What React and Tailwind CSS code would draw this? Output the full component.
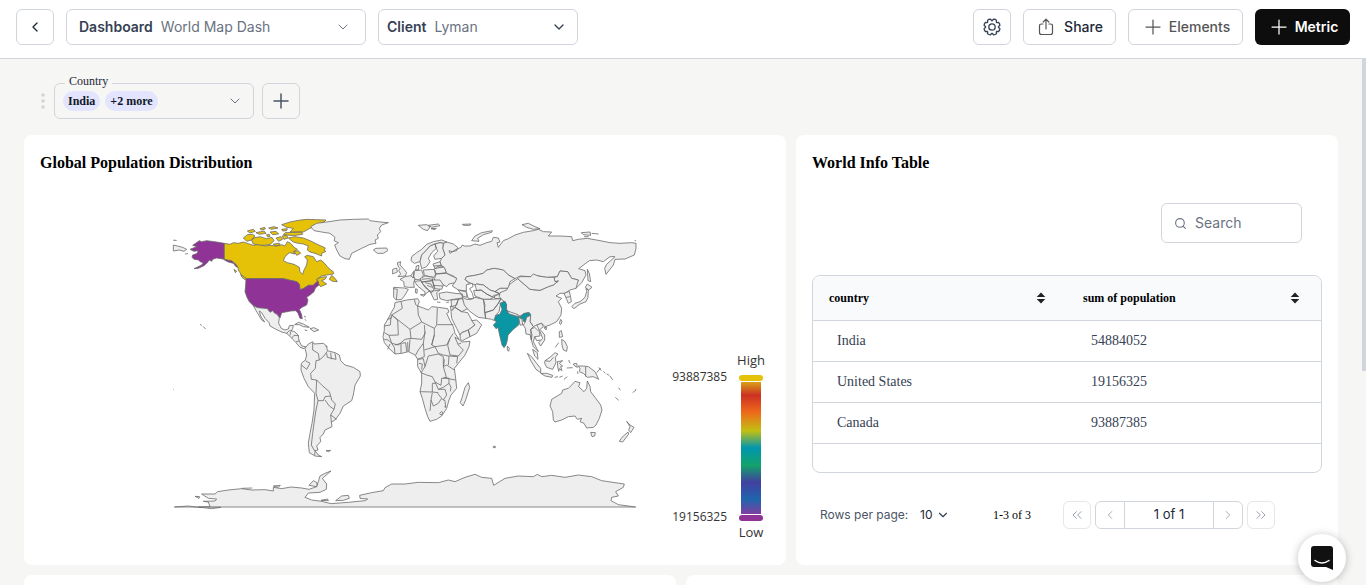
import { ChevronDown, ChevronLeft, ChevronRight, ChevronsLeft, ChevronsRight, Plus, Search } from 'lucide-react';

// Each region has its own origin, offset by `at` inside the 1410x915 map canvas
const regions = [
  {
    id: 'north-america',
    at: 'translate(0 0)',
    shapes: [
      { fill: '#8f3397', d: 'M163,100L140,96L110,92L95,95L88,92L68,106L80,110L70,114L60,118L72,124L84,122L82,130L68,135L66,142L72,148L86,150L90,155L100,158L95,165L72,176L85,175L102,167L112,158L118,150L125,154L128,148L140,144L163,148L175,150L185,152L198,163L204,172L198,170L190,160L175,156L163,150Z' },
      { fill: '#e5c207', d: 'M163,100L180,103L190,98L205,100L220,96L235,101L250,106L265,103L285,108L300,106L320,108L335,104L345,108L352,95L362,100L372,112L382,118L370,125L375,132L358,128L345,140L340,152L352,158L372,163L388,172L390,185L398,193L402,180L410,165L412,150L404,140L412,136L430,140L440,155L452,150L462,158L472,170L482,180L490,185L490,192L470,195L455,198L440,208L445,212L437,222L430,226L415,226L400,236L390,239L388,222L380,215L360,211L340,206L228,206L215,196L205,180L204,172L198,163L185,152L163,148Z' },
      { fill: '#e5c207', d: 'M440,208L452,202L470,200L465,208L455,212L470,222L452,230L445,222ZM478,208L485,196L495,205L502,215L488,214ZM192,178L200,184L196,188ZM212,194L230,206L226,210L216,202Z' },
      { fill: '#e5c207', d: 'M335,44L360,36L385,31L410,28L440,29L468,30L462,36L440,42L432,50L418,56L400,66L360,66L370,55L350,52ZM345,68L395,66L398,73L370,77L340,74ZM355,84L375,80L400,84L420,92L440,102L466,114L462,120L468,124L455,130L455,138L435,130L420,126L412,120L415,108L400,102L385,100L370,96ZM250,84L270,80L290,86L306,82L312,92L300,104L275,106L250,102L245,92ZM220,84L232,74L248,73L255,78L245,90L230,94ZM232,63L250,58L256,64L240,69ZM258,68L282,63L288,70L268,73ZM300,66L318,64L326,72L308,74ZM270,56L284,52L286,57L274,60ZM296,54L312,50L324,54L304,58ZM318,84L332,80L338,88L326,94ZM336,78L350,76L354,84L342,88ZM372,124L385,122L392,130L380,136ZM310,102L328,100L330,106L314,107ZM290,74L298,73L300,79L292,80ZM335,58L352,56L350,62L338,63Z' },
      { fill: '#8f3397', d: 'M228,206L340,206L360,211L380,215L388,222L390,239L400,236L415,226L430,226L437,218L444,212L447,225L436,234L432,245L420,255L410,262L414,270L410,285L396,292L388,298L394,312L397,326L390,325L384,310L378,302L362,303L352,305L335,308L330,324L320,312L314,310L308,302L300,307L292,296L262,293L250,287L238,275L231,262L225,245L227,225Z' },
      { d: 'M250,287L262,293L292,296L300,307L308,302L314,310L320,312L328,322L326,340L334,355L345,360L355,357L358,347L370,346L368,356L362,365L350,370L335,366L318,358L300,348L297,338L285,325L275,308L268,303L272,318L284,336L275,330L262,308Z' },
      { d: 'M350,370L358,362L372,364L385,375L387,392L395,408L407,410L402,416L390,412L378,398L365,384ZM365,384L372,376L385,377M378,396L388,392M362,365L360,376' },
      { d: 'M374,344L385,337L400,342L418,352L400,350L388,344ZM420,356L432,353L446,360L432,365ZM404,360L412,362M402,318L408,322M404,328L409,332' },
      { d: 'M10,105L22,108L38,112L50,118L42,124L28,120L10,123ZM12,90L20,92M45,132L54,131M90,343L95,346M99,349L107,357' },
    ],
  },
  {
    id: 'north-atlantic',
    at: 'translate(360 0)',
    shapes: [
      { d: 'M62,50L80,40L110,36L150,30L190,28L235,27L240,32L270,36L295,38L275,45L268,55L272,65L262,75L265,85L255,90L258,100L240,103L215,115L195,125L185,130L178,148L165,146L150,138L140,120L134,105L145,98L132,92L135,82L120,70L95,66L72,62Z' },
      { d: 'M250,120L258,115L290,114L293,122L280,130L262,130ZM322,158L332,155L330,165L342,178L350,188L346,198L324,200L332,192L326,182L330,176L324,168ZM308,178L320,174L322,186L308,192Z' },
    ],
  },
  {
    id: 'eurasia',
    at: 'translate(615 0)',
    shapes: [
      { d: 'M130,46L155,44L165,50L158,62L145,58ZM160,46L190,42L195,47L170,52ZM168,56L184,55L180,59ZM262,43L288,42L285,46L265,46ZM290,92L300,78L320,68L352,62L350,67L325,74L308,85L312,94Z' },
      { d: 'M205,100L215,96L235,102L248,112L245,122L232,125L222,122L225,130L240,120L258,112L262,105L268,108L285,108L300,102L315,106L335,98L350,94L355,82L370,84L375,96L366,98L370,112L385,92L400,86L420,75L445,67L475,62L490,58L505,65L530,66L520,78L555,78L590,80L593,92L610,88L637,85L675,92L705,98L735,100L770,98L783,100L783,115L778,135L750,147L720,148L715,165L693,193L689,175L695,163L720,140L705,140L685,155L665,150L643,152L611,176L630,182L633,195L620,218L603,235L598,230L610,210L590,205L578,185L555,183L547,200L515,202L475,195L467,200L435,198L420,206L400,195L385,180L358,175L335,180L325,190L300,196L275,200L270,208L282,220L275,243L250,240L232,228L245,205L235,198L215,190L210,178L198,165L195,155L200,145L210,135L203,115Z' },
      { d: 'M110,140L125,128L140,118L155,103L175,95L200,90L215,96L205,100L195,98L180,102L165,108L155,120L140,135L135,155L118,160L108,152Z' },
      { d: 'M135,155L140,135L155,120L165,108L180,102L184,115L170,128L160,145L165,155L155,170L140,176ZM180,102L195,98L205,100L203,115L210,135L200,145L180,148L176,138L188,124L184,115Z' },
      { d: 'M75,208L90,200L108,197L120,206L116,220L118,232L100,232L88,230L86,215ZM56,232L88,234L100,238L88,258L80,268L64,270L56,262ZM56,236L67,238L64,270' },
      { d: 'M118,182L140,180L145,195L140,210L120,208L115,195ZM122,180L124,168L132,166L130,180ZM108,197L116,184L118,190L114,204ZM145,180L178,178L182,195L175,202L148,196ZM178,178L186,170L208,172L214,188L184,192ZM182,192L214,190L245,205L240,218L222,222L215,230L200,222L178,210ZM174,162L195,155L198,166L205,170L180,176ZM176,168L200,166' },
      { d: 'M135,206L150,198L175,202L172,212L140,216ZM118,214L138,212L142,220L165,244L158,246L150,254L150,246L128,228ZM140,216L172,212L180,235L170,248L150,232ZM150,218L168,222L176,238M156,226L172,232M172,210L195,210L205,225L200,238L178,236ZM174,226L203,228M140,208L158,206L174,208M165,244L195,240L185,248L188,268L178,270ZM136,254L150,254L146,259ZM122,236L127,238L126,250L121,248ZM186,276L196,277M214,278L222,276' },
      { d: 'M192,250L215,246L240,250L262,252L262,264L235,268L215,272L195,266ZM250,240L275,246L276,262L262,258ZM228,270L250,268L245,285L230,290ZM250,268L262,266L278,296L260,305L240,292ZM226,288L238,292L228,302ZM228,305L240,292L260,305L278,308L290,330L300,345L280,360L260,368L255,375L245,355L230,325Z' },
      { d: 'M290,332L305,330L312,336L320,345L305,370L285,380L280,360L300,345ZM255,375L260,368L280,360L285,380L262,392L256,388Z' },
      { d: 'M270,208L275,200L300,196L325,190L335,180L358,175L385,180L400,195L420,206L405,215L400,235L375,235L360,245L345,240L325,225L305,222L300,225L280,216Z' },
      { d: 'M300,225L305,222L325,225L345,240L360,245L372,250L355,262L335,252L318,240L305,242ZM296,242L318,240L335,252L355,262L345,268L325,268L300,258ZM360,245L375,235L400,235L398,245L378,252ZM356,256L388,252L392,264L360,266Z' },
      { d: 'M262,262L275,268L290,268L300,262L325,268L330,285L328,300L332,325L310,322L295,312L280,300L268,285ZM325,268L345,268L378,266L370,280L355,300L330,308L328,290ZM332,325L330,308L355,300L370,280L378,266L388,272L376,284L372,305L360,318L365,335L350,328Z' },
      { fill: '#ffffff', d: 'M274,224L292,220L294,230L284,236L292,250L296,265L280,266L274,245Z' },
    ],
  },
  {
    id: 'east-asia',
    at: 'translate(990 0)',
    shapes: [
      { d: 'M53,206L75,225L90,238L120,241L145,230L160,225L175,213L165,215L162,202L172,200L180,183L203,185L215,205L235,210L228,235L210,240L195,250L180,250L168,258L185,265L175,275L185,295L183,315L170,335L150,345L135,350L125,340L110,345L100,350L90,335L92,315L85,307L60,318L35,312L20,300L18,280L5,268L-2,260L0,248L20,240L30,222Z' },
      { d: 'M53,206L60,200L92,200L100,192L115,198L140,202L162,202L165,215L175,213L160,225L145,230L120,241L90,238L75,225Z' },
      { fill: '#0b96a3', d: 'M0,280L15,274L20,285L18,298L28,310L50,318L60,320L72,310L88,308L92,314L80,322L76,336L70,334L68,326L60,324L56,345L40,358L24,375L22,390L18,405L12,413L6,405L0,380L-6,352L-12,356L-20,345L-10,335L-18,328L-10,315L0,312L6,298Z' },
      { d: 'M22,408L28,415L26,424L22,420ZM20,302L54,314L55,320L28,312ZM56,322L66,328L68,345L60,345Z' },
      { d: 'M76,336L80,322L92,316L90,335L100,350L92,358L96,375L94,390L90,374L78,372L76,355L70,345ZM92,358L104,352L118,365L120,378L104,380L100,395L110,415L115,425L100,410L94,390ZM110,345L125,340L130,350L120,358L134,375L134,390L122,408L116,398L128,385L120,365ZM104,380L110,392L122,390M132,353L140,352L138,360Z' },
      { d: 'M192,250L208,244L212,262L214,275L205,280L200,268ZM198,262L211,260M215,290L225,280L240,275L255,262L260,245L258,235L265,240L264,262L258,275L240,282L222,296ZM256,232L262,222L276,232L266,240ZM262,178L268,190L272,215L264,212ZM178,340L182,328L186,334L182,344Z' },
      { d: 'M66,44L85,40L105,50L120,56L100,58L80,52ZM244,68L270,66L272,76L250,74ZM275,70L296,72M404,92L408,92M252,80L266,80' },
    ],
  },
  {
    id: 'africa',
    at: 'translate(615 270)',
    shapes: [
      { d: 'M60,8L78,4L95,0L128,-4L133,5L128,18L145,24L160,30L170,20L190,22L218,26L222,36L215,40L225,62L235,80L240,100L252,118L260,126L285,124L282,140L270,165L250,190L238,205L242,235L245,265L228,285L222,300L215,325L200,348L185,358L165,364L158,350L150,325L142,295L135,275L140,250L140,220L128,200L128,178L120,165L100,155L80,160L60,162L42,145L28,128L24,110L28,90L28,75L40,55L50,35L58,22Z' },
      { fill: 'none', d: 'M78,4L82,25L50,45L48,55L36,58M48,50L46,75L28,78M50,45L68,60L70,105L42,106L28,98M50,45L105,88L140,66L130,45L128,18M118,-2L122,14L128,18M140,66L178,85L185,75L187,24M187,74L235,74M178,85L178,105L170,135L180,140L215,135L225,115L235,100M105,88L108,115L90,118L70,135L50,130L42,106M28,118L40,120L50,130M108,115L140,118L150,100L148,75M105,118L102,155M150,95L145,130L130,150L122,165' },
      { fill: 'none', d: 'M145,130L148,170L128,178M148,150L180,140L190,160L205,165M160,168L190,162L205,170L205,200L215,235L200,235L198,256L180,246L172,230L155,225L138,218L150,200L160,168M128,178L145,176L150,200M132,190L142,192L140,208M135,275L172,276L172,250L182,250M172,276L190,278M180,246L190,268L205,262L222,250L222,235L205,232M205,200L215,195L238,210M215,235L242,240M222,168L220,195M205,165L222,168L248,170L245,190M225,115L218,135L225,165L250,168L265,150L250,135L240,112M178,105L170,135' },
      { fill: 'none', d: 'M165,333L168,300L172,278M168,300L175,318L190,310L200,295L188,280M190,268L210,268L215,285L205,300L200,295M205,300L210,302L212,322M222,250L228,262L226,274M38,148L45,132M60,162L58,142L50,130M60,135L78,130L78,160M80,130L92,128L95,155M98,126L99,155M194,340L200,334L204,340L198,345ZM208,320L214,322M208,178L206,198M240,112L252,118' },
      { d: 'M262,290L270,262L280,248L284,262L272,300L264,318L256,308ZM250,132L258,130' },
    ],
  },
  {
    id: 'south-america',
    at: 'translate(360 360)',
    shapes: [
      { d: 'M45,55L55,42L68,35L72,42L100,40L110,48L112,62L135,68L148,75L152,92L165,105L190,112L210,125L211,138L195,165L190,195L185,212L160,228L150,250L135,270L124,276L126,290L105,300L100,312L90,322L92,335L80,348L84,360L75,362L85,375L95,380L75,378L58,368L55,340L60,310L66,280L72,240L74,190L55,170L42,145L33,120L34,100L46,90L50,75Z' },
      { fill: 'none', d: 'M68,38L68,60L85,70L88,90L78,92L76,115L62,130L64,148L80,150L78,190M34,105L50,118L60,100L46,92M112,64L100,80L88,90M122,68L124,88M135,70L138,88L112,82L110,70M80,150L95,165L118,185L122,198L105,200L100,212L84,212L78,190M122,198L125,210L136,222L132,238L118,228L105,210M132,238L122,255L124,276M122,255L140,268M84,212L78,240L72,280L68,310L64,345L75,365L74,376' },
      { d: 'M108,362L122,361L116,365ZM106,48L112,50' },
    ],
  },
  {
    id: 'oceania',
    at: 'translate(990 300)',
    shapes: [
      { d: 'M155,268L165,262L185,250L188,240L205,235L215,225L225,214L240,218L236,230L252,245L260,235L262,213L270,230L272,245L285,262L302,285L306,300L298,325L288,345L280,352L260,354L252,340L240,335L245,325L232,328L225,318L205,320L185,330L165,336L160,330L158,305L150,288Z' },
      { d: 'M272,367L286,368L284,378L276,380ZM380,334L390,345L402,352L392,368L386,360L390,350ZM384,366L386,372L368,396L358,394L366,382Z' },
      { d: 'M135,152L150,142L165,128L174,132L166,142L168,158L158,178L140,172L134,160ZM135,152L150,154L160,142M82,130L95,140L108,158L122,175L122,188L108,178L94,155ZM122,190L140,190L158,196L156,202L135,198ZM172,155L188,152L178,160L188,168L182,170L186,182L178,176L176,184L173,170ZM98,118L112,128L114,148L104,138Z' },
      { d: 'M235,168L250,168L265,170L285,185L296,208L280,200L262,202L250,190L238,185L240,176ZM257,170L257,200M220,162L230,160L232,172L224,168ZM178,65L184,62L188,80L178,82ZM185,88L195,95L202,110L200,124L190,120L186,105ZM166,112L176,98M164,202L174,200M178,202L188,198M192,208L202,200M200,174L218,173M206,150L210,160M290,188L302,174M296,172L304,182M310,184L316,190M320,192L328,196M330,198L338,210M356,233L361,241M346,262L356,271M398,248L408,240M232,184L234,192' },
    ],
  },
  {
    id: 'antarctica',
    at: 'translate(-15 750)',
    shapes: [
      { d: 'M28,141L70,138L100,142L135,140L130,126L115,124L150,123L155,117L130,115L110,102L150,102L158,95L190,90L230,86L260,90L300,89L325,93L325,82L350,86L378,81L410,84L432,88L455,80L460,65L465,48L480,40L498,33L490,40L472,55L485,72L484,88L465,97L430,99L420,112L440,120L470,124L498,131L550,127L600,122L608,117L585,115L584,106L620,98L655,92L660,83L680,72L720,72L760,67L820,68L850,60L870,65L900,52L930,43L950,52L980,55L986,76L1020,55L1060,48L1105,50L1117,43L1130,50L1160,46L1200,52L1240,45L1280,50L1310,62L1350,68L1378,72L1375,82L1352,95L1360,108L1340,112L1338,122L1360,134L1412,141Z' },
      { d: 'M90,109L104,110L102,115ZM325,78L346,76L340,82ZM432,76L445,62L456,68L455,80ZM512,122L530,108L550,106L553,115L535,121ZM468,121L488,117L490,122ZM230,85L262,84M100,141L140,146L168,142Z' },
    ],
  },
];

const specks = 'M10,91h4M10,538h2M970,709h6v4h-6zM1396,538h3';

const rows = [
  { country: 'India', population: 54884052 },
  { country: 'United States', population: 19156325 },
  { country: 'Canada', population: 93887385 },
];

const outline = 'rounded-md border border-gray-300 bg-white';

// Rounded teeth: each one spans an eighth of the circle
const gearPath = Array.from({ length: 8 }, (_, i) => {
  const point = (radius, offset) => {
    const angle = ((i + offset) * Math.PI) / 4 - Math.PI / 2;
    return `${(10 + radius * Math.cos(angle)).toFixed(2)} ${(10 + radius * Math.sin(angle)).toFixed(2)}`;
  };
  return `${i ? 'L' : 'M'}${point(6.5, 0.08)}L${point(8, 0.24)}Q${point(8.6, 0.5)} ${point(8, 0.76)}L${point(6.5, 0.92)}`;
}).join('') + 'Z';

function GearIcon() {
  return (
    <svg width="20" height="20" viewBox="0 0 20 20" fill="none" stroke="currentColor" strokeWidth="1.300" strokeLinejoin="round" aria-hidden="true">
      <path d={gearPath} />
      <circle cx="10" cy="10" r="3.200" />
    </svg>
  );
}

function ShareIcon() {
  return (
    <svg width="20" height="20" viewBox="0 0 20 20" fill="none" stroke="#555" strokeWidth="1.200" strokeLinecap="round" strokeLinejoin="round" aria-hidden="true">
      <path d="M7 7H5.500Q3.500 7 3.500 9V15.500Q3.500 17.500 5.500 17.500H14.500Q16.500 17.500 16.500 15.500V9Q16.500 7 14.500 7H13M10 12V2.500M7.200 5L10 2.200L12.800 5" />
    </svg>
  );
}

function SortIcon() {
  return (
    <svg width="10" height="12" viewBox="0 0 10 12" fill="#222" aria-hidden="true">
      <path d="M5 0.500L9.300 5H0.700ZM5 11.500L0.700 7H9.300Z" />
    </svg>
  );
}

function WorldMap() {
  return (
    <svg className="w-[470px] min-w-0 shrink" viewBox="0 0 1410 915" role="img" aria-label="World map" fill="#eeeeee" stroke="#6b6b6b" strokeWidth="2.400" strokeLinejoin="round">
      {regions.map((region) => (
        <g key={region.id} transform={region.at}>
          {region.shapes.map((shape) => (
            <path key={shape.d} d={shape.d} fill={shape.fill} />
          ))}
        </g>
      ))}
      <path d={specks} />
    </svg>
  );
}

function Legend() {
  return (
    <div className="mt-[141px] flex gap-2.5 text-xs leading-[18px] text-[#333] font-['Open_Sans',sans-serif]">
      <div className="mt-[17px] flex h-[158px] flex-col justify-between text-right">
        <span>93887385</span>
        <span>19156325</span>
      </div>
      <div className="flex flex-col items-center">
        <span className="mb-1.5 text-[13px]">High</span>
        <div className="h-1.5 w-6 rounded-full bg-[#e5c207]" />
        <div className="my-px h-[132px] w-5 bg-[linear-gradient(to_bottom,#d9a018_0%,#cc3022_10%,#ee6a1a_23%,#c2bf12_37%,#0096b0_50%,#12a36b_63%,#4140a0_76%,#2065ad_89%,#7e3fa0_100%)]" />
        <div className="h-1.5 w-6 rounded-full bg-[#8f3397]" />
        <span className="mt-0.5 text-[13px]">Low</span>
      </div>
    </div>
  );
}

function Header() {
  return (
    <header className="flex shrink-0 items-center justify-between border-b border-gray-300 bg-white px-4 pt-[9px] pb-[13px]">
      <div className="flex gap-3">
        <button type="button" aria-label="Back" className={`flex h-9 w-[38px] items-center justify-center text-gray-800 ${outline}`}>
          <ChevronLeft size={16} />
        </button>
        <div className={`flex h-9 w-[300px] items-center pr-3.5 pl-3 ${outline}`}>
          <label htmlFor="dashboard" className="mr-2 font-semibold text-gray-700">Dashboard</label>
          <select id="dashboard" className="min-w-0 flex-1 appearance-none bg-transparent text-gray-500">
            <option>World Map Dash</option>
          </select>
          <ChevronDown size={16} strokeWidth={1.5} className="text-gray-500" />
        </div>
        <div className={`flex h-9 w-[200px] items-center pr-2.5 pl-2 ${outline}`}>
          <label htmlFor="client" className="mr-2 font-semibold text-gray-700">Client</label>
          <select id="client" className="min-w-0 flex-1 appearance-none bg-transparent text-gray-500">
            <option>Lyman</option>
          </select>
          <ChevronDown size={16} className="text-gray-700" />
        </div>
      </div>
      <div className="flex gap-3">
        <button type="button" aria-label="Settings" className={`flex h-9 w-[38px] items-center justify-center text-gray-700 ${outline}`}>
          <GearIcon />
        </button>
        <button type="button" className={`flex h-9 w-[93px] items-center justify-center gap-2 font-medium text-gray-800 ${outline}`}>
          <ShareIcon /> Share
        </button>
        <button type="button" className={`flex h-9 w-[115px] items-center justify-center gap-1 font-medium text-[#555] ${outline}`}>
          <Plus size={24} strokeWidth={1.25} /> Elements
        </button>
        <button type="button" className="flex h-9 w-[95px] items-center justify-center gap-1 rounded-md bg-[#0d0d0d] font-semibold text-white">
          <Plus size={24} strokeWidth={1.25} /> Metric
        </button>
      </div>
    </header>
  );
}

function Filters() {
  return (
    <div className="flex items-center pl-4">
      <svg width="6" height="18" viewBox="0 0 6 18" fill="#d1d5db" aria-hidden="true">
        <circle cx="3" cy="3" r="1.800" />
        <circle cx="3" cy="9" r="1.800" />
        <circle cx="3" cy="15" r="1.800" />
      </svg>
      <div className="relative ml-2">
        <span id="country-label" className="absolute -top-2.5 left-[11px] bg-[#f6f6f4] px-1 text-xs leading-4 text-gray-800">Country</span>
        <button type="button" aria-haspopup="listbox" aria-labelledby="country-label" className="flex h-9 w-[200px] items-center gap-[5px] rounded-md border border-gray-300 pr-2.5 pl-2 text-xs font-bold text-gray-900">
          <span className="rounded-full bg-[#e3e5fe] px-[5px] leading-5">India</span>
          <span className="rounded-full bg-[#e3e5fe] px-[5px] leading-5">+2 more</span>
          <ChevronDown size={16} strokeWidth={1.5} className="ml-auto text-gray-500" />
        </button>
      </div>
      <button type="button" aria-label="Add filter" className="ml-2 flex h-9 w-[38px] items-center justify-center rounded-md border border-gray-300 text-gray-600">
        <Plus size={24} strokeWidth={1.5} />
      </button>
    </div>
  );
}

function Pagination() {
  const square = 'flex h-7 w-7 items-center justify-center rounded-md border border-gray-200 text-gray-400';
  return (
    <div className="mt-7 flex items-center pl-2 text-xs text-gray-600 font-[Inter,sans-serif]">
      <label htmlFor="page-size" className="w-[100px]">Rows per page:</label>
      <select id="page-size" className="w-4 appearance-none bg-transparent text-gray-800">
        <option>10</option>
      </select>
      <ChevronDown size={14} className="text-gray-700" />
      <span className="ml-[43px] text-black font-['Liberation_Serif',serif]">1-3 of 3</span>
      <div className="ml-8 flex gap-1">
        <button type="button" aria-label="First page" className={square}><ChevronsLeft size={16} strokeWidth={1.5} /></button>
        <div className="flex h-7 divide-x divide-gray-300 rounded-md border border-gray-300">
          <button type="button" aria-label="Previous page" className="flex w-[29px] items-center justify-center text-gray-400"><ChevronLeft size={14} strokeWidth={1.5} /></button>
          <span className="flex w-[89px] items-center justify-center text-[13px] text-gray-800">1 of 1</span>
          <button type="button" aria-label="Next page" className="flex w-7 items-center justify-center text-gray-400"><ChevronRight size={14} strokeWidth={1.5} /></button>
        </div>
        <button type="button" aria-label="Last page" className={square}><ChevronsRight size={16} strokeWidth={1.5} /></button>
      </div>
    </div>
  );
}

function InfoTable() {
  return (
    <section className="rounded-lg bg-white p-4">
      <h2 className="text-base leading-6 font-bold text-black">World Info Table</h2>
      <div className="mt-7 mr-5 ml-auto flex h-10 w-[141px] items-center gap-2 rounded-md border border-gray-300 px-3 font-[Inter,sans-serif]">
        <Search size={13} className="shrink-0 text-gray-500" />
        <input type="search" aria-label="Search" placeholder="Search" className="w-full min-w-0 text-sm placeholder:text-gray-500" />
      </div>
      <div className="mt-8 overflow-hidden rounded-lg border border-gray-300 pb-7">
        <table className="w-full table-fixed text-left">
          <thead className="bg-[#f8fafc]">
            <tr className="h-11 border-b border-gray-300 text-xs text-black">
              {['country', 'sum of population'].map((name) => (
                <th key={name} scope="col" className="px-4">
                  <button type="button" className="flex w-full items-center justify-between pr-[5px] font-bold">
                    {name} <SortIcon />
                  </button>
                </th>
              ))}
            </tr>
          </thead>
          <tbody>
            {rows.map((row) => (
              <tr key={row.country} className="h-[41px] border-b border-gray-300 text-sm text-gray-700">
                <td className="px-6">{row.country}</td>
                <td className="px-6">{row.population}</td>
              </tr>
            ))}
          </tbody>
        </table>
      </div>
      <Pagination />
    </section>
  );
}

export default function App() {
  return (
    <div className="flex h-screen flex-col overflow-hidden bg-[#f6f6f4] text-sm font-[Inter,sans-serif]">
      <Header />
      <div className="flex min-h-0 flex-1">
        <main className="min-w-0 flex-1 overflow-hidden px-6 pt-6 font-['Liberation_Serif',serif]">
          <Filters />
          <div className="mt-4 grid min-h-[430px] grid-cols-[762fr_542fr] gap-2.5">
            <section className="rounded-lg bg-white p-4">
              <h2 className="text-base leading-6 font-bold text-black">Global Population Distribution</h2>
              <div className="mt-[35px] flex items-start justify-end gap-8 pr-[5px]">
                <WorldMap />
                <Legend />
              </div>
            </section>
            <InfoTable />
          </div>
          <div className="mt-2.5 grid grid-cols-2 gap-2.5">
            <section className="h-72 rounded-lg bg-white" />
            <section className="h-72 rounded-lg bg-white" />
          </div>
        </main>
        <div className="h-[312px] w-1 bg-gray-300" />
      </div>
      <button type="button" aria-label="Open chat" className="fixed right-5 bottom-[3px] flex size-12 items-center justify-center rounded-full bg-white shadow-[0_1px_8px_rgba(0,0,0,0.25)]">
        <svg width="22" height="24" viewBox="0 0 22 24" fill="none" aria-hidden="true">
          <path d="M3 0H19Q22 0 22 3V24L15 21H3Q0 21 0 18V3Q0 0 3 0Z" fill="#111" />
          <path d="M4 14.500Q11 19.500 18 14.500" stroke="#fff" strokeWidth="1.500" strokeLinecap="round" />
        </svg>
      </button>
    </div>
  );
}
